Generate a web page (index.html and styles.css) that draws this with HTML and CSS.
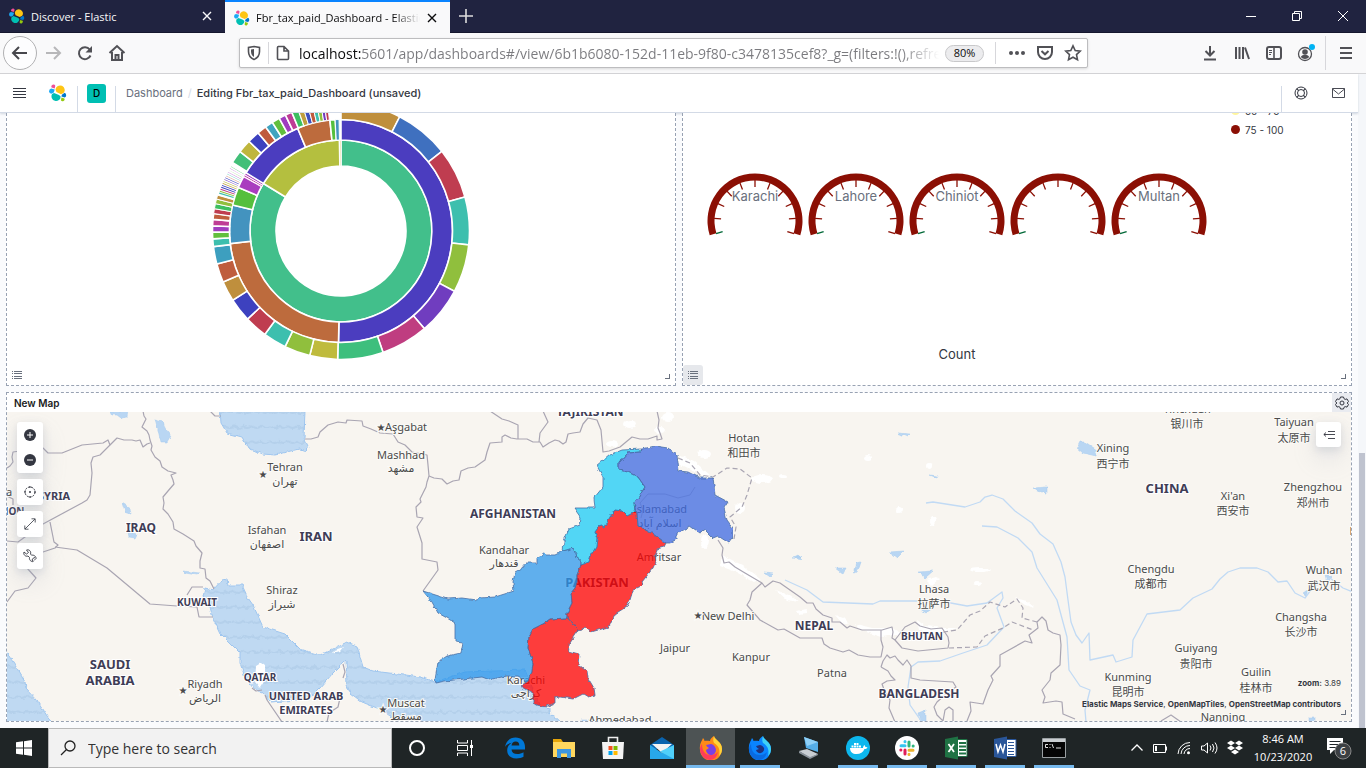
FILE: index.html
```html
<!DOCTYPE html>
<html lang="en">
<head>
<meta charset="utf-8">
<title>Fbr_tax_paid_Dashboard - Elastic</title>
<link rel="stylesheet" href="styles.css">
</head>
<body>
<svg class="defs" aria-hidden="true">
  <symbol id="elastic" viewBox="0 0 18 18">
    <path fill="#fec514" d="M6.500 5.500a4.600 4.600 0 1 1 8 3.600l-2.500 1.100-4.600-2.100z"/>
    <path fill="#00bfb3" d="M11.700 12.400a4.600 4.600 0 1 1-8.600-2.300l1.900-1.200 5 2.200z"/>
    <path fill="#f04e98" d="M2.600 3.600l3.100.8.600-2.600a2 2 0 0 0-3.700 1.800z"/>
    <path fill="#1ba9f5" d="M2.200 4.500l3.500.9-.9 3-2.500 1.400A2.700 2.700 0 0 1 2.200 4.500z"/>
    <path fill="#93c90e" d="M12.500 13.600l2.900.8a1.900 1.900 0 0 1-3.500 1.800z"/>
    <path fill="#0077cc" d="M15.700 13.500l-3.300-.9.500-1.900 2.800-1.900a2.600 2.600 0 0 1 0 4.700z"/>
  </symbol>
  <symbol id="list" viewBox="0 0 12 12"><path stroke="#69707d" d="M1 2.500h1M3 2.500h8M1 4.500h1M3 4.500h8M1 7.500h1M3 7.500h8M1 9.500h1M3 9.500h8"/></symbol>
  <symbol id="close" viewBox="0 0 12 12"><path stroke="currentColor" stroke-width="1.400" d="M2 2l8 8M10 2l-8 8"/></symbol>
</svg>

<div class="tabs" role="tablist">
  <div class="tab">
    <svg class="i16"><use href="#elastic"/></svg>
    <span class="tab-title">Discover - Elastic</span>
    <button class="bare" aria-label="Close tab"><svg class="i12"><use href="#close"/></svg></button>
  </div>
  <div class="tab tab-active">
    <svg class="i16"><use href="#elastic"/></svg>
    <span class="tab-title tab-fade">Fbr_tax_paid_Dashboard - Elastic</span>
    <button class="bare" aria-label="Close tab"><svg class="i12"><use href="#close"/></svg></button>
  </div>
  <button class="bare new-tab" aria-label="New tab"><svg class="i16" viewBox="0 0 16 16"><path stroke="#ddd" stroke-width="1.600" d="M8 1v14M1 8h14"/></svg></button>
  <div class="win">
    <button class="bare" aria-label="Minimize"><svg class="i12" viewBox="0 0 12 12"><path stroke="#fff" d="M1 6.500h10"/></svg></button>
    <button class="bare" aria-label="Restore"><svg class="i12" viewBox="0 0 12 12"><path fill="none" stroke="#fff" d="M1.500 3.500h7v7h-7zM3.500 3.500v-2h7v7h-2"/></svg></button>
    <button class="bare" aria-label="Close"><svg class="i12" viewBox="0 0 12 12"><path stroke="#fff" d="M1 1l10 10M11 1L1 11"/></svg></button>
  </div>
</div>

<nav class="toolbar">
  <button class="back" aria-label="Back"><svg class="i18" viewBox="0 0 18 18"><path class="ln" d="M2 9h14M8 3L2 9l6 6"/></svg></button>
  <button class="bare nav-b dim" aria-label="Forward"><svg class="i18" viewBox="0 0 18 18"><path class="ln" d="M2 9h14M10 3l6 6-6 6"/></svg></button>
  <button class="bare nav-b" aria-label="Reload"><svg class="i18" viewBox="0 0 18 18"><path class="ln" d="M14.500 11.500a6 6 0 1 1-.8-6"/><path fill="currentColor" d="M16 2v6.500H9.500z"/></svg></button>
  <button class="bare nav-b" aria-label="Home"><svg class="i18" viewBox="0 0 18 18"><path class="ln" d="M1.500 9L9 2l7.500 7M4 8v8h10V8"/><path class="ln" stroke-width="1.500" d="M7.500 16v-5h3v5"/></svg></button>
  <div class="url">
    <svg class="i16" viewBox="0 0 16 16"><path class="ln thin" d="M8 1.500l5.500 1v4c0 4-2 6.500-5.500 8-3.500-1.500-5.500-4-5.500-8v-4z"/><path fill="currentColor" d="M8 4v8c-2-1-3-3-3-5.500V4.500z"/></svg>
    <i class="rule"></i>
    <svg class="i16" viewBox="0 0 16 16"><path class="ln thin" d="M3 1.500h6L13.500 6v7.500a1 1 0 0 1-1 1h-9a1 1 0 0 1-1-1v-11a1 1 0 0 1 1-1zM9 1.500V6h4.500"/></svg>
    <input class="address" type="text" aria-label="Address" value="localhost:5601/app/dashboards#/view/6b1b6080-152d-11eb-9f80-c3478135cef8?_g=(filters:!(),refreshInterval">
    <button class="zoom-pill">80%</button>
    <i class="rule"></i>
    <button class="bare u" aria-label="Page actions"><svg class="i18" viewBox="0 0 18 18"><g fill="currentColor"><circle cx="3" cy="9" r="2"/><circle cx="9" cy="9" r="2"/><circle cx="15" cy="9" r="2"/></g></svg></button>
    <button class="bare u" aria-label="Save to Pocket"><svg class="i18" viewBox="0 0 18 18"><path class="ln" d="M2 3h14v5a7 7 0 0 1-14 0z"/><path class="ln" d="M5.500 7L9 10.300 12.500 7"/></svg></button>
    <button class="bare u" aria-label="Bookmark"><svg class="i18" viewBox="0 0 18 18"><path class="ln thin" d="M9 1.800l2.200 4.700 5.100.6-3.800 3.500 1 5.100L9 13.200l-4.500 2.500 1-5.100L1.700 7.100l5.100-.6z"/></svg></button>
  </div>
  <div class="tools">
    <button class="bare t" aria-label="Downloads"><svg class="i16" viewBox="0 0 16 16"><path class="ln" d="M8 1v9M3.500 6L8 10.500 12.500 6M2 14.500h12"/></svg></button>
    <button class="bare t" aria-label="Library"><svg class="i16" viewBox="0 0 16 16"><path class="ln" d="M2 2v12M5.500 2v12M9 2v12M11 2.500L15 14"/></svg></button>
    <button class="bare t" aria-label="Sidebars"><svg class="i16" viewBox="0 0 16 16"><rect class="ln" x="1" y="2" width="14" height="12" rx="2"/><path class="ln thin" d="M8 2v12"/><path stroke="currentColor" d="M3 5.500h3M3 7.500h3M3 9.500h2"/></svg></button>
    <button class="bare t" aria-label="Account"><svg class="i18" viewBox="0 0 18 18"><circle fill="none" stroke="currentColor" stroke-width="1.300" cx="8" cy="10" r="6.500"/><circle fill="currentColor" cx="8" cy="8" r="2.800"/><path fill="currentColor" d="M3.800 13c1.500-3 7-3 8.400 0-2 2.600-6.400 2.600-8.400 0z"/><circle fill="#00b3f4" cx="15" cy="3" r="3"/></svg></button>
    <i class="rule rule-tall"></i>
    <button class="bare t menu" aria-label="Menu"><svg class="i16" viewBox="0 0 16 16"><path class="ln" d="M2 3h12M2 8h12M2 13h12"/></svg></button>
  </div>
</nav>

<div class="view">
 <div class="app">
  <header class="header">
    <button class="bare hb" aria-label="Toggle navigation"><svg class="i14" viewBox="0 0 14 14"><path stroke="#343741" d="M1 2.500h13M1 5.500h13M1 8.500h13M1 11.500h13"/></svg></button>
    <a class="brand" href="#" aria-label="Elastic"><svg class="i18"><use href="#elastic"/></svg></a>
    <i class="vr"></i>
    <span class="space">D</span>
    <i class="vr"></i>
    <nav class="crumbs"><a href="#">Dashboard</a><span class="slash">/</span><strong>Editing Fbr_tax_paid_Dashboard (unsaved)</strong></nav>
    <i class="vr"></i>
    <button class="bare hi" aria-label="Help"><svg class="i14" viewBox="0 0 14 14"><g fill="none" stroke="#343741"><circle cx="7" cy="7" r="6"/><circle cx="7" cy="7" r="3.500"/><path d="M4.500 4.500L2.500 3M4.500 4.500L3.200 2.500M9.500 4.500l1.500-2M9.500 4.500l2-1.200M4.500 9.500l-2 1.500M4.500 9.500L3.200 11.500M9.500 9.500l1.500 2M9.500 9.500l2 1.200"/></g></svg></button>
    <button class="bare hi" aria-label="News"><svg class="i14" viewBox="0 0 14 14"><path fill="none" stroke="#343741" stroke-width=".9" d="M.5 2.500h12v9H.5zM.5 3l6 5 6-5"/></svg></button>
  </header>
  <main class="grid">
    <section class="panel cut">
      <svg id="donut" class="donut" viewBox="-130 -118 260 250"></svg>
      <button class="bare lg" aria-label="Toggle legend"><svg class="i12"><use href="#list"/></svg></button>
      <i class="grip"></i>
    </section>
    <section class="panel cut gauge-panel">
      <div class="gauge-col">
        <div id="gauges" class="gauges"></div>
        <div class="count">Count</div>
      </div>
      <ul class="legend"><li><i class="dot pale"></i>50 - 75</li><li><i class="dot"></i>75 - 100</li></ul>
      <button class="bare lg lg-on" aria-label="Toggle legend"><svg class="i12"><use href="#list"/></svg></button>
      <i class="grip"></i>
    </section>
    <section class="panel map-panel">
      <div class="panel-head"><h2>New Map</h2><button class="bare gear" aria-label="Panel options"><svg class="i14" viewBox="0 0 14 14"><g fill="none" stroke="#343741"><path d="M5.500 1h3l.5 1.700 1.200.7 1.800-.5 1.500 2.600L12.200 7l1.300 1.500-1.500 2.600-1.800-.5-1.200.7-.5 1.700h-3L5 11.300l-1.200-.7-1.800.5L.5 8.500 1.800 7 .5 5.500 2 2.900l1.800.5L5 2.700z"/><circle cx="7" cy="7" r="2"/></g></svg></button></div>
      <div class="map">
        <svg class="map-svg" viewBox="7 412 1344 309" preserveAspectRatio="xMidYMid slice">
          <defs>
            <pattern id="waves" width="18" height="15" patternUnits="userSpaceOnUse"><rect width="18" height="15" fill="#bfd9f2"/><path fill="none" stroke="#b4d0eb" stroke-width="2" d="M0 6q4.500 4 9 0q4.500 4 9 0"/></pattern>
            <filter id="rough" x="0" y="0" width="100%" height="100%"><feTurbulence type="fractalNoise" baseFrequency="0.180" numOctaves="2" seed="4"/><feDisplacementMap in="SourceGraphic" scale="4" xChannelSelector="R" yChannelSelector="G"/></filter>
          </defs>
          <rect x="7" y="412" width="1344" height="309" fill="#f8f5f0"/>
          <g filter="url(#rough)">
          <g fill="#fff">
            <ellipse cx="868" cy="458" rx="4" ry="3"/><ellipse cx="929" cy="466" rx="3" ry="3"/><ellipse cx="899" cy="510" rx="3" ry="3"/><ellipse cx="933" cy="521" rx="3" ry="5"/><ellipse cx="762" cy="479" rx="11" ry="4"/><ellipse cx="783" cy="476" rx="4" ry="2"/><ellipse cx="704" cy="454" rx="7" ry="4"/><ellipse cx="980" cy="570" rx="10" ry="2"/><ellipse cx="977" cy="583" rx="4" ry="2"/><ellipse cx="705" cy="541" rx="4" ry="7"/><ellipse cx="740" cy="508" rx="5" ry="5"/><ellipse cx="630" cy="424" rx="6" ry="4"/><ellipse cx="668" cy="417" rx="6" ry="5"/><ellipse cx="612" cy="444" rx="6" ry="3"/><ellipse cx="660" cy="430" rx="6" ry="3"/>
            <path d="M680 455l14 6 16 14-5 3-14-8-12-6zM722 555l20 10 18 14-6 3-18-10-16-6zM776 590l15 6 8 6-12-2zM797 611l10-2 0 4-8 1zM835 615l8 3 6 6-8-2zM856 624l16 4 20 0 10 6-20 3-22-7zM917 620l8 6 20 2 12 0-18 6-20-4zM1015 598l12 3 8 7-10-3zM926 580l10-3 4 2-8 7z"/>
          </g>
          <g fill="url(#waves)" stroke="#9fc6ef" stroke-width="1">
            <path d="M220 410L221 423 227 433 242 437 248 448 263 454 275 455 300 449 306 451 309 448 304 438 305 410z"/>
            <path d="M5 650L15 665 25 682 26 688 37 700 52 723H5z"/>
            <path d="M205 588L213 590 222 580 227 579 228 585 242 585 248 598 253 605 263 627 285 634 300 649 320 655 333 649 347 642 357 646 363 667 373 671 397 674 420 677 435 682 465 672 525 670 540 706 550 708 550 713 562 724H395L390 715 382 710 362 702 350 693 347 685 346 660 338 668 333 673 320 688 313 695 300 700 270 702 262 693 253 688 245 677 240 663 240 653 220 633 213 618 210 607 203 597z"/>
          </g>
          <path fill="#fff" d="M256 666l5-3 4 3 0 14-5 8-5-6z"/>
          <path fill="#fff" d="M335 650l8-3-3 4-7 2z"/>
          <g fill="#b9d6f3" stroke="#a4caef" stroke-width=".5"><path d="M110 411h18l-1 6-6 1-4-3-5 0zM155 419l8 2 2 7 6 8-4 7-6 0-3-13zM122 503l8 5 1 6-6-2zM128 532l9 2-2 4-6-1zM183 571l17 2-3 2-12-2zM898 433l12 1-3 3zM930 475l8 1-1 2zM1033 488l14-1 0 6-10-2zM889 552l15-1-7 7zM835 568l11 0-3 6zM854 573l3-10 4-1-3 9zM918 572l15-1-8 7zM792 558l6-3 5 5zM1077 448l3-6 5 0 12 8-1 6-13-3zM764 572l10 1-4 4zM793 557l6-1 3 2zM919 608l14 0-7 5zM1303 593l6-4-2 7zM1326 574l6 3-4 6zM918 713l8-3v11h-6zM1309 718h6v4h-6zM582 719h6v3h-6z"/></g>
          </g>
          <g fill="none" stroke="#c1daf4" stroke-width="1.300" stroke-linejoin="round">
            <path d="M926 503L933 502 965 507 980 502 985 497 992 495 1003 499 1015 511 1032 523 1040 534 1053 544 1061 562 1065 577 1068 600 1071 622 1076 635 1082 643 1089 633 1090 660 1113 655 1116 662 1132 657 1133 640 1147 614 1180 610 1193 598 1212 589 1220 579 1228 572 1240 568 1257 568 1268 572 1278 582 1287 581 1295 593 1305 598 1313 587 1330 578 1343 588 1353 592"/>
            <path d="M982 526L997 527 1018 538 1032 552 1037 568 1057 600 1067 637 1069 670 1080 686 1090 690 1085 710 1086 722"/>
            <path d="M785 580L807 590 823 602 873 604 880 601 940 601 967 606 987 603 1002 592 1003 598 997 608 1004 627 987 645 963 653 940 661 918 662 911 667 908 687 910 705 922 722"/>
          </g>
          <g fill="none" stroke="#a9a5b2" stroke-width="1.200" stroke-linejoin="round">
            <path d="M7 468L10 466 13 462 12 457 13 452 43 448 48 453 62 453 82 445 103 443 108 440 110 445 117 438 124 440 132 440 136 441 140 440 143 447 147 444 150 443"/>
            <path d="M143 411L144 416 146 419 142 427 147 431 149 435 150 440 152 446 151 450 155 457 160 461 162 467 168 471 176 473 171 475 173 480 174 484 168 491 163 497 164 503 163 509 168 514 173 522 174 529 183 534 194 541 196 546 202 553 200 561 200 568 205 569 206 578 210 581 214 589"/>
            <path d="M110 445L100 455 93 457 91 463 92 473 90 495 87 500 82 503 43 524 18 542 7 541M50 522L54 542 58 545 55 548 43 552 24 556M55 547L77 550 107 568 150 604 177 606 197 607 199 617 213 617M187 595L192 587 203 587M27 568L36 578 28 588 15 591 7 602M210 411L215 416 221 416M7 496l6 3 0 6"/>
            <path d="M305 439L311 439 318 437 320 432 328 425 338 422 346 423 347 420 362 421 363 426 371 429 380 433 393 434 398 442 405 445 412 452 427 455 428 465 429 476 427 482 426 487 423 493 420 499 421 502 416 507 417 517 423 518 417 527 422 543 422 559 437 562 438 570 423 591"/>
            <path d="M429 476L434 478 442 479 447 484 453 481 459 480 461 471 468 468 475 467 485 460 487 452 490 443 502 442 502 437 505 435 511 438 517 439 527 439 533 442 540 442 543 447 549 443 555 440 559 441 563 444 566 442 568 434 573 433 580 432 583 424 588 418 597 420 601 430 603 452 609 451 620 447 632 437 640 439 648 439 657 436 657 440 662 439 660 433 658 428 659 420 657 411M490 411L502 419 509 421 518 425 518 439M543 411L548 422 540 433 539 442"/>
            <path d="M265 695L267 700 282 722M252 688L256 691 262 690M327 722L329 713 338 707 340 698M343 664l2 8-2 6"/>
            <path d="M718 540L723 548 722 555 724 563 729 562 735 567 745 573 762 583 752 592 750 600 747 605 760 620 778 630 784 629 800 638 822 638 824 644 830 648 843 652 849 650 858 655 870 657 881 657 883 647 881 640 881 630M762 583L765 587 773 581 780 583 790 590 800 597 807 603 813 603 816 609 823 615 832 618 832 622 840 622 847 628 850 626 862 630 882 630 892 627 893 632 892 638 895 640 902 648 918 651 948 648 949 643 948 637 942 628 931 629 920 626 915 622 905 627 895 640"/>
            <path d="M881 667L883 661 887 655 890 658 895 656 898 660 903 665 907 660 911 666 911 678 920 680 953 682 956 687 946 694 937 702 934 707 937 715 943 721 945 710 949 707 953 710 953 722M881 667L888 671 891 676 895 680 887 681 882 684 885 692 890 700 889 708 895 722M967 721L971 711 970 702 983 704 988 690 993 680 991 676 1000 666 1000 655 1009 650 1025 641 1032 643 1029 635 1038 628 1037 622 1042 617 1046 621 1048 630 1053 633 1060 635 1061 645 1060 665 1051 673 1050 680 1042 690 1045 697 1043 703 1056 701 1062 702 1063 714 1075 719M1161 721l10-6 10 7"/>
            <path stroke-dasharray="5 3" d="M943 632L957 630 970 615 980 611 990 602 1005 607 1017 599 1023 608 1022 618 1037 622M949 648L977 647 985 636 1003 628 1012 622 1033 630M678 458L690 463 700 475 713 477 727 468 740 469 752 478 747 495 742 507 730 517 736 527 734 539"/>
          </g>
          <g class="city" text-anchor="middle">
            <text x="285" y="471">Tehran</text><text x="285" y="485">تهران</text>
            <text x="267" y="534">Isfahan</text><text x="267" y="548">اصفهان</text>
            <text x="282" y="594">Shiraz</text><text x="282" y="608">شیراز</text>
            <text x="205" y="688">Riyadh</text><text x="205" y="702">الرياض</text>
            <text x="406" y="431">Aşgabat</text>
            <text x="401" y="459">Mashhad</text><text x="401" y="472">مشهد</text>
            <text x="504" y="554">Kandahar</text><text x="504" y="567">قندهار</text>
            <text x="526" y="684">Karachi</text><text x="526" y="697">کراچی</text>
            <text x="406" y="707">Muscat</text><text x="406" y="720">مسقط</text>
            <text x="744" y="442">Hotan</text><text x="744" y="457">和田市</text>
            <text x="660" y="513">Islamabad</text><text x="660" y="527">اسلام آباد</text>
            <text x="659" y="561">Amritsar</text><text x="728" y="620">New Delhi</text>
            <text x="675" y="652">Jaipur</text><text x="751" y="661">Kanpur</text><text x="832" y="677">Patna</text>
            <text x="620" y="724">Ahmedabad</text>
            <text x="934" y="593">Lhasa</text><text x="934" y="608">拉萨市</text>
            <text x="1113" y="452">Xining</text><text x="1113" y="468">西宁市</text>
            <text x="1187" y="413">Yinchuan</text><text x="1187" y="428">银川市</text>
            <text x="1294" y="426">Taiyuan</text><text x="1294" y="442">太原市</text>
            <text x="1313" y="491">Zhengzhou</text><text x="1313" y="507">郑州市</text>
            <text x="1233" y="500">Xi'an</text><text x="1233" y="515">西安市</text>
            <text x="1151" y="573">Chengdu</text><text x="1151" y="588">成都市</text>
            <text x="1324" y="574">Wuhan</text><text x="1324" y="590">武汉市</text>
            <text x="1301" y="621">Changsha</text><text x="1301" y="636">长沙市</text>
            <text x="1196" y="652">Guiyang</text><text x="1196" y="668">贵阳市</text>
            <text x="1256" y="676">Guilin</text><text x="1256" y="692">桂林市</text>
            <text x="1128" y="681">Kunming</text><text x="1128" y="696">昆明市</text>
            <text x="1223" y="721">Nanning</text><text x="1363" y="535">Hefei</text><text x="9" y="496">a</text>
            <g class="star"><text x="263" y="478">★</text><text x="183" y="694">★</text><text x="381" y="431">★</text><text x="383" y="713">★</text><text x="698" y="619">★</text></g>
          </g>
          <g class="country" text-anchor="middle">
            <g class="c13"><text x="316" y="541">IRAN</text><text x="110" y="669">SAUDI</text><text x="110" y="685">ARABIA</text><text x="1167" y="493">CHINA</text><text x="597" y="587">PAKISTAN</text></g>
            <g class="c12"><text x="513" y="518">AFGHANISTAN</text><text x="590" y="416">TAJIKISTAN</text><text x="141" y="532">IRAQ</text><text x="814" y="630">NEPAL</text><text x="919" y="698">BANGLADESH</text></g>
            <g class="c11"><text x="54" y="500">SYRIA</text><text x="306" y="700">UNITED ARAB</text><text x="306" y="714">EMIRATES</text></g>
            <g class="c10"><text x="197" y="606">KUWAIT</text><text x="260" y="681">QATAR</text><text x="922" y="640">BHUTAN</text><text x="0" y="515">LEBANON</text></g>
          </g>
          <g class="regions" filter="url(#rough)">
            <path fill="#2c98ec" d="M423 591L448 599 463 598 477 600 480 598 495 597 514 591 513 583 515 572 522 568 526 563 537 563 537 559 545 553 547 555 555 555 563 551 573 548 576 553 577 558 581 561 581 565 577 575 577 582 575 588 571 593 572 603 567 613 567 618 550 619 543 624 533 629 529 636 528 648 533 663 532 672 527 682 517 676 507 676 497 678 490 680 482 677 463 679 445 681 436 683 435 680 438 662 447 656 461 653 463 643 455 642 455 623 447 618 438 613 432 602z"/>
            <path fill="#f00" d="M567 618L573 623 578 630 568 645 569 651 580 654 579 665 587 671 588 678 594 688 595 695 588 697 583 694 573 699 560 697 555 698 555 703 545 707 537 705 533 702 533 692 527 690 520 686 527 682 532 672 533 663 528 648 529 636 533 629 543 624 550 619z"/>
            <path fill="#f00" d="M567 618L567 613 572 603 571 593 575 588 577 582 577 575 581 565 589 562 591 555 596 547 597 538 595 532 600 525 604 528 610 517 615 510 622 511 627 516 633 513 635 509 637 513 638 526 653 534 666 543 664 547 657 549 655 557 656 561 653 568 642 582 643 585 633 590 630 600 626 607 615 614 609 627 591 632 586 628 578 630 573 623z"/>
            <path fill="#18cbf7" d="M563 551L564 541 569 529 580 525 581 518 574 508 595 508 594 498 603 487 603 477 597 466 610 455 622 450 642 449 640 452 628 453 619 463 619 470 628 472 638 477 645 487 638 498 634 503 635 509 633 513 627 516 622 511 615 510 610 517 604 528 600 525 595 532 597 538 596 547 591 555 589 562 581 565 581 561 577 558 576 553 573 548z"/>
            <path fill="#3d68e1" d="M642 449L655 446 668 448 677 455 678 462 679 471 688 472 700 478 713 478 715 495 728 502 724 508 727 520 733 528 733 538 729 543 718 536 713 538 705 530 700 533 690 526 677 533 677 539 670 543 666 543 653 534 638 526 637 513 635 509 634 503 638 498 645 487 638 477 628 472 619 470 619 463 628 453 640 452z"/>
          </g>
          <path fill="none" stroke="#5876d0" stroke-width="1" stroke-opacity=".6" d="M641 518L643 510 640 503 648 494 665 494 678 498 690 495 695 487"/>
        </svg>
        <div class="controls">
          <div class="ctl"><button class="bare cb" aria-label="Zoom in"><svg class="i12" viewBox="0 0 12 12"><circle cx="6" cy="6" r="6" fill="#343741"/><path stroke="#fff" d="M3 6h6M6 3v6"/></svg></button><button class="bare cb" aria-label="Zoom out"><svg class="i12" viewBox="0 0 12 12"><circle cx="6" cy="6" r="6" fill="#343741"/><path stroke="#fff" d="M3 6h6"/></svg></button></div>
          <button class="bare ctl sq" aria-label="Fit to data"><svg class="i12" viewBox="0 0 12 12"><circle cx="6" cy="6" r="5" fill="none" stroke="#343741" stroke-dasharray="2 1"/><circle cx="6" cy="6" r="1" fill="#343741"/><path stroke="#343741" d="M6 0v2M6 10v2M0 6h2M10 6h2"/></svg></button>
          <button class="bare ctl sq" aria-label="Full extent"><svg class="i12" viewBox="0 0 12 12"><path fill="none" stroke="#343741" stroke-width=".8" d="M1 11L11 1M7.500.8h3.700v3.700M.8 7.500v3.700h3.700"/></svg></button>
          <button class="bare ctl sq" aria-label="Tools"><svg class="i14" viewBox="0 0 14 14"><path fill="none" stroke="#343741" stroke-width=".9" d="M1 3l2.500 2L5.500 3.500 3.500 1C6 0 8.500 2.500 7.500 5l1.200 1.300c2-.8 4.800 1.200 4.300 3.700M1 3c-1 2.500 1.500 5 4 4l1.500 1.500c-.6 2 1.500 4.700 3.700 4M10.200 12.500L9 11l1.200-1.800L12 8.500M11 11.500l1.500-1.500"/></svg></button>
        </div>
        <button class="bare ctl layers" aria-label="Layers"><svg class="i12" viewBox="0 0 12 12"><path fill="none" stroke="#343741" stroke-width=".9" d="M5 2.500h7M1 5.500h11M5 9.500h7M3 3.500l-2.200 2L3 7.500"/></svg></button>
        <div class="attr"><p><b>zoom:</b> 3.89</p><p><a href="#">Elastic Maps Service</a>, <a href="#">OpenMapTiles</a>, <a href="#">OpenStreetMap contributors</a></p></div>
      </div>
      <i class="grip"></i>
    </section>
  </main>
 </div>
 <div class="scroll"><i></i></div>
</div>

<footer class="taskbar">
  <button class="bare start" aria-label="Start"><svg class="i16" viewBox="0 0 16 16"><path fill="#fff" d="M0 2.300l7-1v6.200H0zM8 1.200L16 0v7.500H8zM0 8.500h7v6.200l-7-1zM8 8.500h8V16l-8-1.200z"/></svg></button>
  <label class="search"><svg class="i18" viewBox="0 0 18 18"><circle cx="11" cy="7" r="5" fill="none" stroke="#222" stroke-width="1.300"/><path stroke="#222" stroke-width="1.300" d="M7.500 10.500L2 16"/></svg><input type="text" aria-label="Search" placeholder="Type here to search"></label>
  <button class="bare app-b" aria-label="Cortana"><svg class="i24" viewBox="0 0 24 24"><circle cx="12" cy="12" r="7" fill="none" stroke="#fff" stroke-width="2"/></svg></button>
  <button class="bare app-b" aria-label="Task view"><svg class="i24" viewBox="0 0 24 24"><path fill="none" stroke="#fff" d="M3.500 4v3h10V4M3.500 20v-3h10v3M3.500 9.500h10v5h-10zM17.500 4v16"/><path fill="#fff" d="M16 9h3v3h-3z"/></svg></button>
  <button class="bare app-b" aria-label="Edge"><svg class="i24" viewBox="0 0 24 24"><path fill="#0078d7" d="M2 11C3 5 7 1.500 12.500 1.500c6 0 9.500 4 9.500 9.500v2.500H8.500c.2 3 2.500 4.500 5.800 4.500 2.300 0 4.500-.7 6.200-1.800v4.600c-2 1.200-4.400 1.700-7 1.700-5.800 0-9.300-3.200-9.300-8.300 0-3.300 1.800-6 4.600-7.500C5.500 7.500 3.200 8.800 2 11zm6.500-1.500h7.800c0-2.400-1.200-4-3.600-4-2.300 0-3.800 1.600-4.200 4z"/></svg></button>
  <button class="bare app-b" aria-label="File Explorer"><svg class="i24" viewBox="0 0 24 24"><path fill="#e5a50a" d="M1 3h8l2 3H1z"/><path fill="#ffd75e" d="M1 6h22v15H1z"/><path fill="#3c96e0" d="M5 13h14v9h-4v-4.500H9V22H5z"/></svg></button>
  <button class="bare app-b" aria-label="Store"><svg class="i24" viewBox="0 0 24 24"><path fill="none" stroke="#eee" stroke-width="1.600" d="M7.500 6V1.500h9V6"/><path fill="#f3f3f3" d="M1 6h22l-1 17H2z"/><path fill="#f25022" d="M7.500 10h4v4h-4z"/><path fill="#7fba00" d="M12.500 10h4v4h-4z"/><path fill="#00a4ef" d="M7.500 15h4v4h-4z"/><path fill="#ffb900" d="M12.500 15h4v4h-4z"/></svg></button>
  <button class="bare app-b" aria-label="Mail"><svg class="i24" viewBox="0 0 24 24"><path fill="#0a63ad" d="M0 9l12-8 12 8v4H0z"/><path fill="#f3f3f3" d="M2 8h20l-10 9z"/><path fill="#28a8ea" d="M0 9l12 8 12-8v14H0z"/><path fill="#50d0fa" d="M24 9v14L10 15.500z"/></svg></button>
  <button class="bare app-b run on" aria-label="Firefox"><svg class="i24" viewBox="0 0 24 24"><path fill="#ff8a16" d="M1 14C0 8 3 5 4 2c1 1 1.500 2 1.500 3 2-.5 4 0 5.500 0C11 3 13 1 15 0c0 4 8 5 8 13a11 11 0 0 1-22 1z"/><path fill="#ffd43a" d="M15 0c1 4 8 6 8 13 0 3-1 5-3 7 2-8-2-11-5-13-1-2-1-4 0-7z"/><path fill="#ff3d5a" d="M1 14c0-2 .5-4 2-6 0 8 4 11 9 11 3 0 5-1 7-3-1 5-4 8-8 8-5 0-9-4-10-10z"/><path fill="#7b3fe4" d="M7 9c2 0 3-1 5-1 1 0 3 1 4 3a5 5 0 1 1-9 3l3-2c-1-1-2-1-3-3z"/></svg></button>
  <button class="bare app-b run" aria-label="Firefox Developer"><svg class="i24" viewBox="0 0 24 24"><path fill="#0a84ff" d="M1 14C0 8 3 5 4 2c1 1 1.500 2 1.500 3 2-.5 4 0 5.500 0C11 3 13 1 15 0c0 4 8 5 8 13a11 11 0 0 1-22 1z"/><path fill="#3fd1f5" d="M15 0c1 4 8 6 8 13 0 3-1 5-3 7 2-8-2-11-5-13-1-2-1-4 0-7z"/><path fill="#0a6ae0" d="M1 14c0-2 .5-4 2-6 0 8 4 11 9 11 3 0 5-1 7-3-1 5-4 8-8 8-5 0-9-4-10-10z"/><path fill="#20327c" d="M8 10c2 0 2-1 4-1 1 0 3 1 4 3a4 4 0 1 1-8 2l3-1c-1-1-2-1-3-3z"/></svg></button>
  <button class="bare app-b" aria-label="Remote Desktop"><svg class="i24" viewBox="0 0 24 24"><path fill="#55aee8" d="M7 1l14 5v10L9 12z"/><path fill="#8fd0f7" d="M7 1l14 5-11 4z"/><path fill="#c9ced3" d="M2 15l8-2 11 5-8 4z"/><path fill="#899199" d="M2 15l11 6 8-3v1l-8 4-11-6z"/></svg></button>
  <button class="bare app-b run" aria-label="Docker"><svg class="i24" viewBox="0 0 24 24"><circle cx="12" cy="12" r="12" fill="#0db7ed"/><path fill="#fff" d="M4 12h13c.2-1.500.6-2.200 1.500-3l1 2 2 .3c-.5 1.400-1.600 1.700-3 1.700-1.500 3.500-4 5-8 5-4 0-6.300-2-6.500-6zM5.500 9.500h2v2h-2zM8 9.500h2v2H8zM10.500 9.500h2v2h-2zM13 9.500h2v2h-2zM8 7h2v2H8zM10.500 7h2v2h-2z"/></svg></button>
  <button class="bare app-b run" aria-label="Slack"><svg class="i24" viewBox="0 0 24 24"><circle cx="12" cy="12" r="12" fill="#fff"/><g stroke-width="3" stroke-linecap="round"><path stroke="#36c5f0" d="M6 9.800h4M10 5.600v.1"/><path stroke="#2eb67d" d="M14 6v4M18.200 10h-.1"/><path stroke="#ecb22e" d="M14 14.200h4M14 18.300v.1"/><path stroke="#e01e5a" d="M10 14v4M5.800 14h.1"/></g></svg></button>
  <button class="bare app-b run" aria-label="Excel"><svg class="i24" viewBox="0 0 24 24"><path fill="#fff" stroke="#1f7244" d="M13 3.500h10v17H13z"/><path stroke="#1f7244" stroke-width="2" d="M15 7h7M15 10.500h7M15 14h7M15 17.500h7"/><path fill="#1f7244" d="M1 3l13-2.500v23L1 21z"/><path stroke="#fff" stroke-width="1.800" d="M4.500 8l5.500 8M10 8l-5.500 8"/></svg></button>
  <button class="bare app-b run" aria-label="Word"><svg class="i24" viewBox="0 0 24 24"><path fill="#fff" stroke="#2a5699" d="M13 3.500h10v17H13z"/><path stroke="#2a5699" d="M15 6.500h6M15 9.500h6M15 12.500h6M15 15.500h6M15 18.500h6"/><path fill="#2a5699" d="M1 3l13-2.500v23L1 21z"/><path fill="none" stroke="#fff" stroke-width="1.500" d="M3 8l2 8 2.500-7L10 16l2-8"/></svg></button>
  <button class="bare app-b run" aria-label="Command Prompt"><svg class="i24" viewBox="0 0 24 24"><path fill="#050505" stroke="#9aa0a3" d="M.5 2.500h23v19H.5z"/><path fill="#c9cdd0" d="M1 3h22v3H1z"/><path stroke="#ddd" d="M6 8.500H3.500v3H6M8 8v1M8 11v1M10 8l1.500 4M14 12h5"/></svg></button>
  <div class="tray">
    <svg class="i14" viewBox="0 0 14 14"><path fill="none" stroke="#fff" stroke-width="1.300" d="M1.500 9.500L7 4l5.500 5.500"/></svg>
    <svg class="i16" viewBox="0 0 16 16"><path fill="none" stroke="#fff" d="M1.500 4.500h12v8h-12zM14.500 6.500v4"/><path fill="#fff" d="M3 6h2v5H3z"/></svg>
    <svg class="i16" viewBox="0 0 16 16"><g fill="none" stroke="#fff"><path d="M2 14A12 12 0 0 1 14 2.500M5 14a9 9 0 0 1 9-8.500M8 14a6 6 0 0 1 6-5.500"/></g><circle cx="12.500" cy="12.800" r="1.500" fill="#fff"/></svg>
    <svg class="i18" viewBox="0 0 18 18"><path fill="none" stroke="#fff" d="M1.500 7v4h2.500l3.500 3V4L4 7zM10 6.500q2 2.500 0 5M12.500 5q3 4 0 8M15 3.500q4 5.500 0 11"/></svg>
    <svg class="i18" viewBox="0 0 18 18"><path fill="#fff" d="M5 1.500L9 4 5 6.500 1 4zM13 1.500L17 4l-4 2.500L9 4zM5 6.500L9 9l-4 2.500L1 9zM13 6.500L17 9l-4 2.500L9 9zM9 10.500l4 2.500-4 2.500L5 13z"/></svg>
  </div>
  <time class="clock">8:46 AM<br>10/23/2020</time>
  <button class="bare notes" aria-label="Notifications"><svg class="note-i" viewBox="0 0 26 26"><path fill="#fff" d="M1 3h16v12H8l-4 4v-4H1z"/><path stroke="#20262a" d="M3.500 6.500h11M3.500 9.500h11M3.500 12.500h7"/><circle cx="17" cy="16" r="8" fill="#3c4043" stroke="#888"/></svg><span class="badge">6</span></button>
</footer>
<script src="charts.js"></script>
</body>
</html>
```

FILE: styles.css
```css
* { box-sizing: border-box; }
body { margin: 0; height: 100vh; overflow: hidden; display: flex; flex-direction: column; font-family: "Inter", "Liberation Sans", sans-serif; font-size: 11px; color: #343741; background: #fafbfd; }
.defs { position: absolute; width: 0; height: 0; }
.bare { border: 0; padding: 0; margin: 0; background: none; color: inherit; font: inherit; display: flex; align-items: center; justify-content: center; }
svg { flex: none; display: block; }
.i12 { width: 12px; height: 12px; }
.i14 { width: 14px; height: 14px; }
.i16 { width: 16px; height: 16px; }
.i18 { width: 18px; height: 18px; }
.i24 { width: 24px; height: 24px; }
.ln { fill: none; stroke: currentColor; stroke-width: 2; }
.thin { stroke-width: 1.6; }
a { color: inherit; text-decoration: none; }

.tabs { height: 33px; flex: none; display: flex; background: #202340; border-bottom: 1px solid #15172e; font-family: "Open Sans", "Noto Sans", sans-serif; font-size: 11px; }
.tab { width: 225px; display: flex; align-items: center; gap: 6px; padding: 0 12px 0 9px; color: #f9f9fa; }
.tab-active { background: #f9f9fa; color: #0c0c0d; border-top: 2px solid #0a84ff; margin-bottom: -1px; }
.tab-title { flex: 1; min-width: 0; overflow: hidden; white-space: nowrap; }
.tab-fade { mask-image: linear-gradient(90deg, #000 84%, transparent); }
.new-tab { width: 32px; }
.win { margin-left: auto; display: flex; }
.win button { width: 46px; }

.toolbar { height: 41px; flex: none; display: flex; align-items: center; background: #f9f9fa; border-bottom: 1px solid #d4d4d6; color: #515156; padding-left: 3px; }
.back { width: 34px; height: 34px; padding: 0; border: 1px solid #b1b1b3; border-radius: 50%; background: #fdfdfe; color: #47474c; display: flex; align-items: center; justify-content: center; }
.nav-b { width: 32px; }
.dim { color: #b7b7b9; }
.url { flex: 1; margin-left: 106px; height: 30px; display: flex; align-items: center; border: 1px solid #bdbdbf; border-radius: 2px; background: #fff; box-shadow: 0 1px 3px #0002; padding: 0 3px 0 6px; gap: 6px; }
.rule { width: 1px; height: 22px; background: #d7d7db; flex: none; }
.address { flex: 1; min-width: 0; border: 0; padding: 0 0 0 2px; height: 26px; font-family: "Open Sans", "Noto Sans", sans-serif; font-size: 14px; color: transparent; -webkit-text-fill-color: transparent; background: linear-gradient(90deg, #0c0c0d 64px, #7a7a7e 64px, #7a7a7e 94%, transparent) text; outline: 0; }
.zoom-pill { border: 1px solid #c8c8ca; background: #ececee; border-radius: 9px; width: 39px; height: 17px; padding: 0; font: 11px/14px "Open Sans", sans-serif; color: #0c0c0d; margin-right: 5px; }
.u { width: 22px; }
.url .rule + .u { margin-left: 4px; }
.tools { display: flex; align-items: center; margin-left: 106px; }
.t { width: 32px; }
.rule-tall { height: 34px; margin-left: 3px; }
.menu { width: 40px; }

.view { flex: 1; min-height: 0; display: flex; }
.app { flex: 1; min-width: 0; display: flex; flex-direction: column; }
.header { height: 39px; flex: none; display: flex; align-items: center; background: #fff; border-bottom: 1px solid #d3dae6; box-shadow: 0 1px 2px #98a2b366; position: relative; }
.hb { width: 38px; }
.brand { width: 39px; display: flex; justify-content: center; }
.vr { width: 1px; height: 26px; align-self: flex-end; background: #d3dae6; }
.space { width: 19px; height: 19px; margin: 0 9px; border-radius: 3px; background: #00bfb3; color: #000; text-align: center; font: 500 10px/19px "Inter", sans-serif; }
.crumbs { flex: 1; padding-left: 10px; color: #69707d; font-size: 11px; display: flex; gap: 5px; }
.crumbs strong { font-weight: 500; color: #343741; }
.slash { color: #d3dae6; }
.hi { width: 38px; }
.scroll { width: 8px; background: #f5f7fa; display: flex; flex-direction: column; align-items: center; }
.scroll i { width: 6px; margin-top: auto; height: 42%; background: #bfc3cf; }

.grid { flex: 1; min-height: 0; display: grid; grid-template-columns: 1fr 1fr; grid-template-rows: 1fr 330px; gap: 6px; padding: 0 6px 6px; }
.panel { position: relative; background: #fff; border: 1px dashed #98a2b3; min-width: 0; min-height: 0; }
.cut { border-top: 0; overflow: hidden; }
.donut { width: 260px; height: 250px; margin: 0 auto; }
.lg { position: absolute; left: 0; bottom: 0; width: 20px; height: 20px; border-radius: 3px; }
.lg-on { background: #e6e8ec; }
.grip { position: absolute; right: 5px; bottom: 6px; width: 5px; height: 5px; border: solid #69707d; border-width: 0 1px 1px 0; }
.gauge-panel { display: flex; }
.gauge-col { flex: 1; display: flex; flex-direction: column; align-items: center; padding-top: 60px; }
.gauges { display: flex; gap: 5px; }
.gauge { width: 96px; height: 66px; }
.gauge text { font-size: 13px; fill: #69707d; }
.count { font-size: 13px; line-height: 20px; margin-top: 105px; }
.legend { width: 120px; height: 26px; margin: 0; padding: 0; list-style: none; overflow: hidden; display: flex; flex-direction: column; justify-content: flex-end; }
.legend li { flex: none; height: 19px; display: flex; align-items: center; gap: 5px; font-size: 10px; }
.dot { width: 9px; height: 9px; border-radius: 50%; background: #8b0f04; }
.pale { background: #fff59d; }

.map-panel { grid-column: 1 / -1; display: flex; flex-direction: column; }
.panel-head { height: 19px; flex: none; display: flex; align-items: center; }
h2 { flex: 1; margin: 0; padding-left: 7px; font-size: 10px; line-height: 18px; font-weight: 600; color: #1a1c21; }
.gear { width: 19px; height: 19px; background: #e9ebf0; }
.map { position: relative; flex: 1; min-height: 0; overflow: hidden; }
.map-svg { width: 100%; height: 100%; }
.city text { font: 11px "Noto Sans", "Noto Sans CJK SC", "DejaVu Sans", sans-serif; fill: #4a4a4a; stroke: #fbfaf7; stroke-width: 2px; paint-order: stroke; }
.star text { font-size: 10px; font-family: "DejaVu Sans", sans-serif; }
.country text { font-family: "Noto Sans", sans-serif; font-weight: 700; fill: #3f3d56; stroke: #fff; stroke-width: 2px; paint-order: stroke; }
.c13 { font-size: 13px; }
.c12 { font-size: 12px; }
.c11 { font-size: 11px; }
.c10 { font-size: 10px; }
.regions path { fill-opacity: 0.75; stroke: #4a6fa5; stroke-width: 1px; stroke-opacity: 0.8; }
.controls { position: absolute; left: 10px; top: 10px; display: flex; flex-direction: column; gap: 6px; }
.ctl { background: #fff; border-radius: 3px; box-shadow: 0 3px 8px #98a2b34d, 0 12px 24px #98a2b333; width: 26px; }
.cb { width: 26px; height: 25px; }
.controls .ctl:first-child { height: 51px; }
.sq { height: 26px; }
.layers { position: absolute; right: 10px; top: 10px; width: 25px; height: 25px; }
.attr { position: absolute; right: 10px; bottom: 10px; text-align: right; font-size: 8px; line-height: 14px; font-weight: 400; }
.attr p { margin: 0 0 7px; }
.attr p:last-child { margin: 0; }
.attr b, .attr a { font-weight: 700; }

.taskbar { height: 40px; flex: none; display: flex; background: #1f2526; color: #fff; font-family: "Open Sans", "Noto Sans", sans-serif; }
.start { width: 48px; }
.search { width: 344px; display: flex; align-items: center; gap: 11px; padding-left: 10px; background: #f2f2f2; border: 1px solid #b9b9b9; }
.search input { flex: 1; border: 0; padding: 0; background: none; outline: 0; font: 14px "Open Sans", sans-serif; }
.search input::placeholder { color: #333; opacity: 1; }
.app-b { width: 49px; border: solid transparent; border-width: 3px 4px; }
.run { background: linear-gradient(#76b9ed, #76b9ed) bottom / 40px 3px no-repeat border-box; }
.on { background: linear-gradient(#76b9ed, #76b9ed) bottom / 100% 3px no-repeat border-box, #4d5354; }
.tray { margin-left: auto; display: flex; align-items: center; gap: 8px; padding-right: 2px; }
.clock { width: 74px; text-align: center; font-size: 11px; line-height: 18px; padding-top: 2px; }
.notes { position: relative; width: 46px; padding-right: 8px; }
.note-i { width: 26px; height: 26px; }
.badge { position: absolute; left: 18px; top: 14px; width: 10px; line-height: 18px; font-size: 11px; text-align: center; }
```

FILE: charts.js
```js
const polar = (r, deg) => {
  const a = deg * Math.PI / 180;
  return (r * Math.sin(a)).toFixed(2) + ' ' + (-r * Math.cos(a)).toFixed(2);
};
const arc = (r0, r1, a0, a1) => {
  const big = a1 - a0 > 180 ? 1 : 0;
  return `M${polar(r1, a0)}A${r1} ${r1} 0 ${big} 1 ${polar(r1, a1)}L${polar(r0, a1)}A${r0} ${r0} 0 ${big} 0 ${polar(r0, a0)}z`;
};

const G = '#42bf8b', V = '#4b3dbf', O = '#bd6b3d';
const rings = [
  { r0: 65, r1: 91, start: 0, parts: [[301.5, G], [359, '#b4bf3f'], [360, '#e0d58a']] },
  { r0: 91, r1: 111.5, start: 0, parts: [[181.3, V], [263.5, O], [283.5, '#4393bf'], [293, '#55bf3d'], [299.3, '#a93dbf'], [300.3, '#bf3da5'], [301.5, '#a93dbf'], [337.1, V], [354.3, O], [357, '#55bf3d'], [359, '#4393bf']] },
  { r0: 111.5, r1: 128.5, start: 0, parts: [[27.2, '#bf8f3d'], [51.7, '#3f70bf'], [74.7, '#bf3d50'], [96.2, '#3dbfae'], [118, '#90bf3d'], [139.5, '#703dbf'], [160.9, '#bf3d80'], [181.5, '#3dbf7d'], [194.1, '#bfbb3d'], [205.8, '#90bf3d'], [216.4, '#3dbfae'], [226.7, '#bf3d50'], [237.4, '#3d41bf'], [246.6, '#bf8f3d'], [255.1, '#bf5d3d'], [263, '#3d9fbf'], [266.5, '#3dbfae'], [269.5, '#62bf3d'], [272.3, '#a03dbf'], [275.2, '#bf3d95'], [277.8, '#bf5d3d'], [280, '#bf3d50'], [282.3, '#3dbf60'], [284.4, '#90bf3d'], [286.2, '#bf8f3d']] },
  { r0: 111.5, r1: 128.5, start: 302.3, parts: [[308.2, '#42bf78'], [314.3, '#bfb63d'], [319.8, '#3d41bf'], [324.1, '#bf5a3d'], [327.7, '#3fa3bf'], [331.3, '#62bf3d'], [334.4, '#a03dbf'], [337.5, '#bf3d95'], [340.6, '#3dbf60'], [343, '#bf9f3d'], [345.2, '#3d50bf'], [347.3, '#bf5a3d'], [349.2, '#3dbfae'], [351, '#90bf3d'], [352.6, '#703dbf'], [354, '#bf3d50']] }
];
let out = '';
for (const ring of rings) {
  let a = ring.start;
  for (const [end, color] of ring.parts) {
    out += `<path d="${arc(ring.r0, ring.r1, a, end)}" fill="${color}" stroke="#fff" stroke-width="${end - a < 2.5 ? 1 : 1.6}"/>`;
    a = end;
  }
}
const thin = ['#3dbfae', '#90bf3d', '#bf3d80', '#3d41bf', '#3d41bf', '#bfa03d', '#bfbb3d', '#703dbf', '#3d41bf', '#bf5d3d', '#3dbfae', '#a03dbf', '#62bf3d', '#a03dbf', '#3dbf60'];
thin.forEach((color, i) => {
  const a = 287 + i * 0.95;
  const w = Math.max(0.1, 0.55 - i * 0.04);
  out += `<path d="${arc(112.5, 127.5, a, a + w)}" fill="${color}"/>`;
});
document.getElementById('donut').innerHTML = out;

document.getElementById('gauges').innerHTML = ['Karachi', 'Lahore', 'Chiniot', '', 'Multan'].map(name => {
  let ticks = '';
  for (let i = -5; i <= 5; i++) {
    const a = i * 21.6;
    ticks += `<path d="M${polar(41, a)}L${polar(34, a)}" stroke="${i === -5 ? '#006837' : '#8b0f04'}" stroke-width="1.300"/>`;
  }
  return `<svg class="gauge" viewBox="-48 -48 96 66"><path d="${arc(40.5, 47.5, -107.5, 107.5)}" fill="#8b0f04"/>${ticks}<text text-anchor="middle" y="-20">${name}</text></svg>`;
}).join('');
```
